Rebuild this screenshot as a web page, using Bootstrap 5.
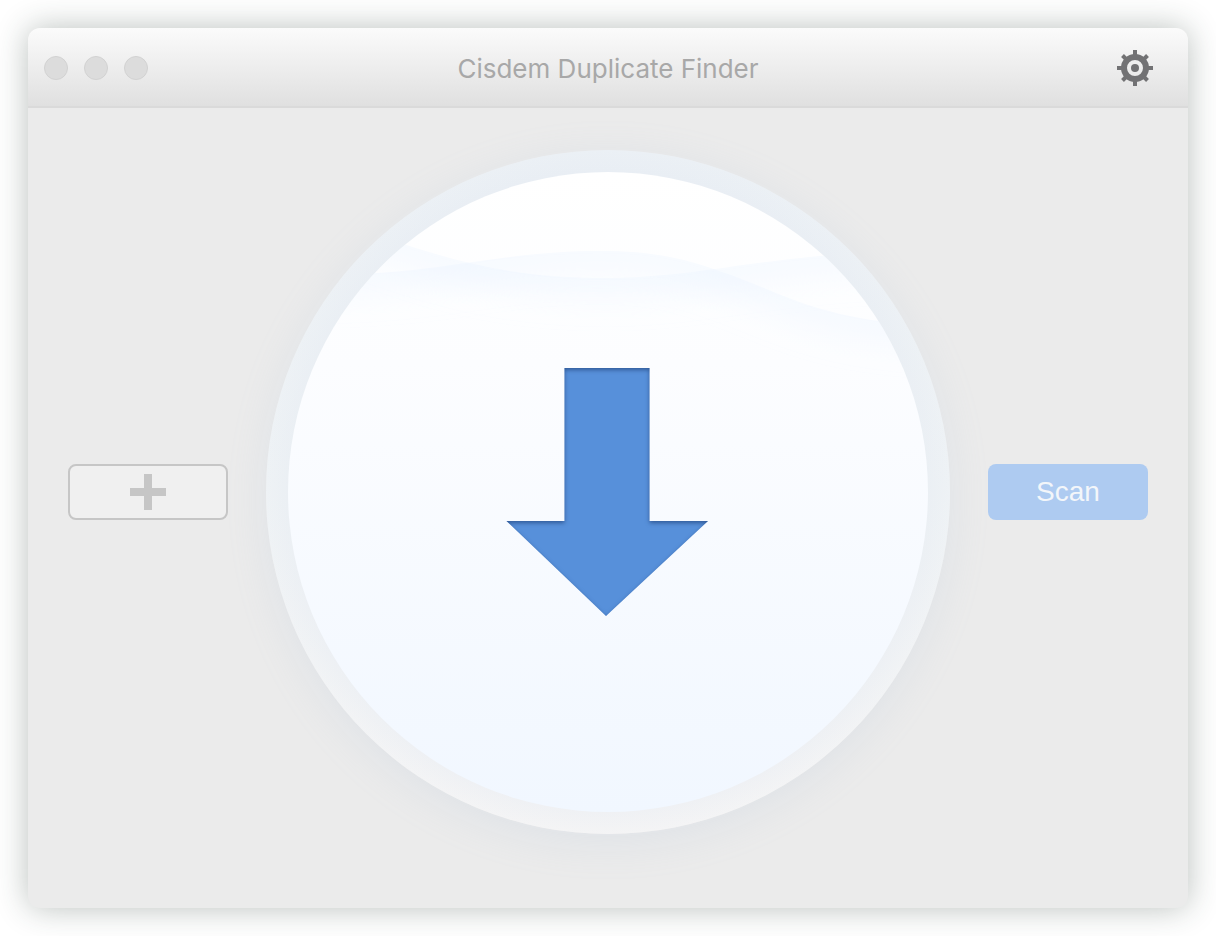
<!DOCTYPE html>
<html lang="en">
<head>
<meta charset="utf-8">
<meta name="viewport" content="width=device-width, initial-scale=1">
<title>Cisdem Duplicate Finder</title>
<link href="https://cdn.jsdelivr.net/npm/bootstrap@5.3.0/dist/css/bootstrap.min.css" rel="stylesheet">
<style>
  body { background: #fff; padding: 28px; font-family: Inter, "Liberation Sans", sans-serif; }
  .app-window { min-height: calc(100vh - 56px); background: #ebebeb; border-radius: 12px; box-shadow: 0 0 32px rgba(40, 60, 50, .32); }
  .title-bar { height: 80px; padding: 2px 16px 0; background: linear-gradient(#fbfbfb, #e0e0e0); border-bottom: 2px solid #dadada; border-radius: 12px 12px 0 0; }
  .bar-side { flex: 1 1 0; }
  .window-dot { width: 24px; height: 24px; padding: 0; border: 1px solid #d2d2d2; border-radius: 50%; background: #dcdcdc; }
  .window-title { padding-top: 2px; font-size: 26px; line-height: 32px; font-weight: 400; color: #a8a8a8; }
  .gear-button { width: 42px; height: 40px; padding: 0; border: 0; background: none; }
  .work-area { padding: 42px 40px 74px; }
  .action-button { width: 160px; height: 56px; padding: 0; border-radius: 8px; }
  .add-button { border: 2px solid #c6c6c6; background: #f0f0f0; }
  .scan-button, .scan-button:hover { border: 0; background: #aecbf1; color: #f3f6fa; font: 28px/32px "Liberation Sans", sans-serif; }
  .drop-zone { flex: 0 1 684px; min-width: 0; aspect-ratio: 1; border-radius: 50%; box-shadow: 0 8px 40px rgba(160, 185, 215, .16); }
</style>
</head>
<body>
<main class="app-window d-flex flex-column">
  <header class="title-bar d-flex align-items-center">
    <div class="bar-side d-flex gap-3">
      <button class="window-dot" type="button" aria-label="Close"></button>
      <button class="window-dot" type="button" aria-label="Minimize"></button>
      <button class="window-dot" type="button" aria-label="Zoom"></button>
    </div>
    <h1 class="window-title text-nowrap mb-0">Cisdem Duplicate Finder</h1>
    <div class="bar-side d-flex justify-content-end">
      <button class="gear-button me-3" type="button" aria-label="Settings">
        <svg class="d-block" width="42" height="40" viewBox="-21 -20 42 40" aria-hidden="true">
          <circle r="11" fill="none" stroke="#727274" stroke-width="6"/>
          <circle r="4" fill="#727274"/>
          <path d="M0-13V-18M0 13V18M-13 0H-18M13 0H18M-9-9L-12.5-12.5M9-9L12.5-12.5M-9 9L-12.5 12.5M9 9L12.5 12.5" stroke="#727274" stroke-width="4"/>
        </svg>
      </button>
    </div>
  </header>

  <section class="work-area flex-grow-1 d-flex align-items-center justify-content-between">
    <button class="btn action-button add-button d-flex align-items-center justify-content-center" type="button" aria-label="Add folder">
      <svg width="36" height="36" viewBox="0 0 36 36" aria-hidden="true"><path d="M14 0h8v14h14v8H22v14h-8V22H0v-8h14z" fill="#c6c6c6"/></svg>
    </button>

    <div class="drop-zone" role="region" aria-label="Drop folders here">
      <svg class="d-block w-100 h-100" viewBox="0 0 684 684" aria-hidden="true">
        <defs>
          <linearGradient id="ring" x2="0" y2="1"><stop stop-color="#ebf0f5"/><stop offset=".5" stop-color="#eef2f5"/><stop offset="1" stop-color="#f4f4f5"/></linearGradient>
          <radialGradient id="ringShade" gradientUnits="userSpaceOnUse" cx="342" cy="342" r="342"><stop offset=".935" stop-color="#e2e8f1" stop-opacity=".25"/><stop offset="1" stop-color="#e2e8f1" stop-opacity="0"/></radialGradient>
          <linearGradient id="disc" x2="0" y2="1"><stop stop-color="#fff"/><stop offset=".3" stop-color="#fcfdff"/><stop offset="1" stop-color="#f1f7ff"/></linearGradient>
          <clipPath id="discClip"><circle cx="342" cy="342" r="320"/></clipPath>
          <clipPath id="backWave"><path d="M120 88C200 116 260 129 350 128C430 126 480 111 580 104H684V684H0V88Z"/></clipPath>
          <clipPath id="frontWave"><path d="M90 124C180 121 240 101 334 101C400 101 430 113 465 125C515 143 550 166 640 174V684H0V124Z"/></clipPath>
          <filter id="fade" filterUnits="userSpaceOnUse" x="0" y="0" width="684" height="300"><feGaussianBlur stdDeviation="16"/></filter>
          <filter id="inset" x="-5%" y="-5%" width="110%" height="110%" color-interpolation-filters="sRGB">
            <feComponentTransfer in="SourceAlpha" result="outside"><feFuncA type="table" tableValues="1 0"/></feComponentTransfer>
            <feGaussianBlur in="outside" stdDeviation="2"/>
            <feOffset dy="2" result="soft"/>
            <feFlood flood-color="#18366b" flood-opacity=".6"/>
            <feComposite in2="soft" operator="in"/>
            <feComposite in2="SourceAlpha" operator="in" result="shade"/>
            <feMerge><feMergeNode in="SourceGraphic"/><feMergeNode in="shade"/></feMerge>
          </filter>
        </defs>
        <circle cx="342" cy="342" r="342" fill="url(#ring)"/>
        <circle cx="342" cy="342" r="342" fill="url(#ringShade)"/>
        <circle cx="342" cy="342" r="320" fill="url(#disc)"/>
        <g clip-path="url(#discClip)" fill="none" stroke="#e6f0ff" stroke-width="36" stroke-opacity=".35">
          <g clip-path="url(#backWave)"><path filter="url(#fade)" d="M60 66L120 88C200 116 260 129 350 128C430 126 480 111 580 104L640 100"/></g>
          <g clip-path="url(#frontWave)"><path filter="url(#fade)" d="M40 126L90 124C180 121 240 101 334 101C400 101 430 113 465 125C515 143 550 166 640 174L684 178"/></g>
        </g>
        <path d="M298.500 218H383.500V371H442L340 466L240.500 371H298.500Z" fill="#5790da" filter="url(#inset)"/>
      </svg>
    </div>

    <button class="btn action-button scan-button" type="button">Scan</button>
  </section>
</main>
<script src="https://cdn.jsdelivr.net/npm/bootstrap@5.3.0/dist/js/bootstrap.bundle.min.js"></script>
</body>
</html>
